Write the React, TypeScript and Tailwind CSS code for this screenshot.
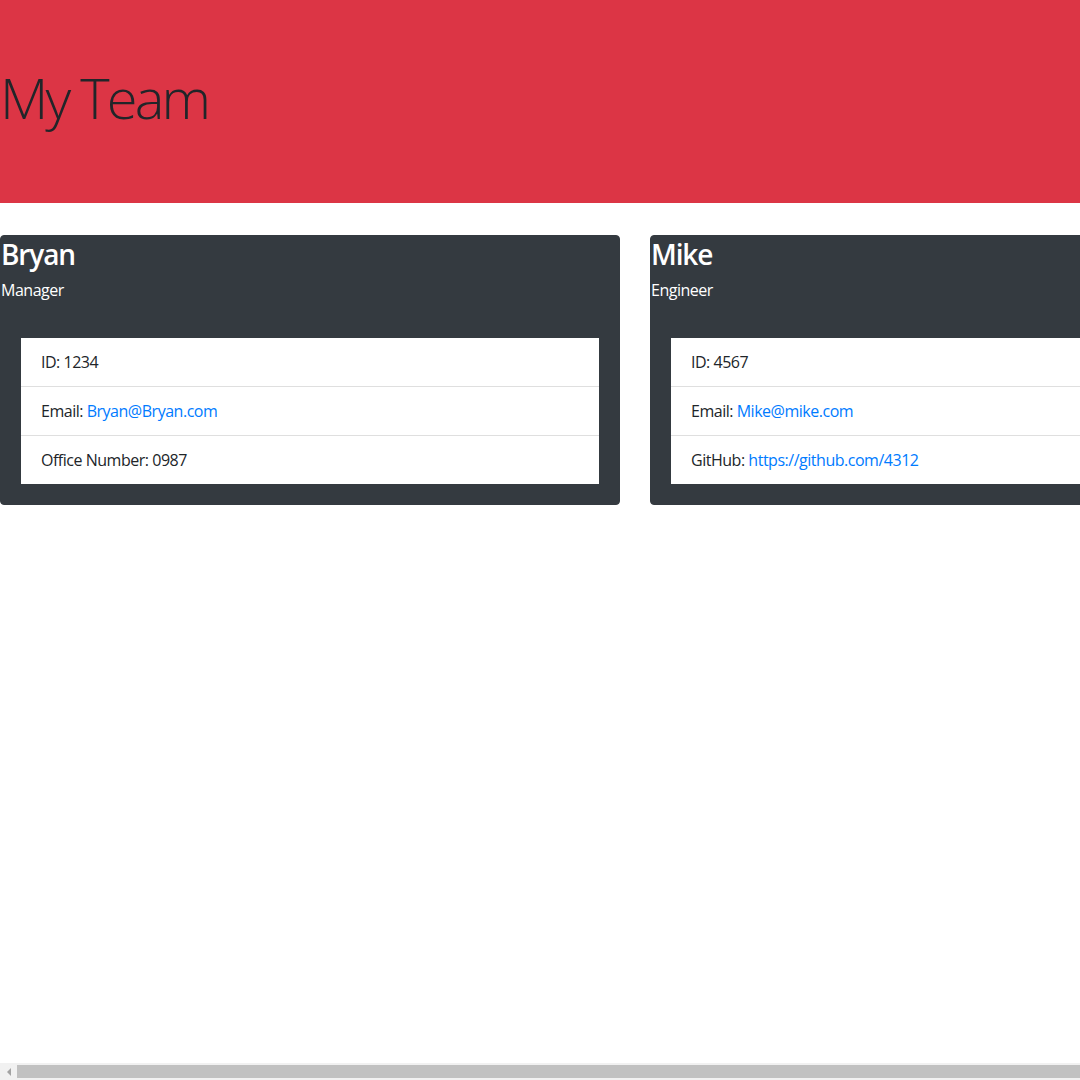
import React from 'react';

type Member = {
  name: string;
  role: string;
  id: string;
  email: string;
  extraLabel: string;
  extraValue: string;
  extraLink?: boolean;
};

const team: Member[] = [
  {
    name: 'Bryan',
    role: 'Manager',
    id: '1234',
    email: 'Bryan@Bryan.com',
    extraLabel: 'Office Number',
    extraValue: '0987',
  },
  {
    name: 'Mike',
    role: 'Engineer',
    id: '4567',
    email: 'Mike@mike.com',
    extraLabel: 'GitHub',
    extraValue: 'https://github.com/4312',
    extraLink: true,
  },
];

function MemberCard({ member }: { member: Member }) {
  return (
    <div className="w-[620px] shrink-0 rounded border border-[#343a40] bg-[#343a40] text-white">
      <h3 className="mb-[6px] pt-[2px] text-[28px] font-semibold leading-[1.2] tracking-[-0.04em]">{member.name}</h3>
      <p className="mb-4 text-base leading-6 tracking-[-0.03em]">{member.role}</p>
      <div className="p-5">
        <ul className="bg-white text-[#212529] tracking-[-0.03em]">
          <li className="px-5 py-3 leading-6">ID: {member.id}</li>
          <li className="border-t border-[#dfdfdf] px-5 py-3 leading-6">
            Email: <a className="text-[#007bff]">{member.email}</a>
          </li>
          <li className="border-t border-[#dfdfdf] px-5 py-3 leading-6">
            {member.extraLabel}:{' '}
            {member.extraLink ? (
              <a className="text-[#007bff]">{member.extraValue}</a>
            ) : (
              member.extraValue
            )}
          </li>
        </ul>
      </div>
    </div>
  );
}

export default function App() {
  return (
    <div
      className="relative h-[1080px] w-[1080px] overflow-hidden bg-white text-base text-[#212529]"
      style={{ fontFamily: '"Open Sans", "Noto Sans", sans-serif' }}
    >
      <div className="mb-8 bg-[#dc3545] py-16">
        <h1 className="mb-2 text-[56px] font-light leading-[1.2] tracking-[-0.05em]">My Team</h1>
      </div>

      <div className="flex gap-[30px]">
        {team.map((m) => (
          <MemberCard key={m.name} member={m} />
        ))}
      </div>

      {/* fake horizontal scrollbar */}
      <div className="absolute bottom-0 left-0 flex h-[17px] w-full items-center bg-[#f1f1f1]">
        <div className="flex w-[17px] justify-center">
          <div className="h-0 w-0 border-y-[4px] border-r-[4px] border-y-transparent border-r-[#a3a3a3]" />
        </div>
        <div className="h-[13px] flex-1 bg-[#c1c1c1]" />
      </div>
    </div>
  );
}
